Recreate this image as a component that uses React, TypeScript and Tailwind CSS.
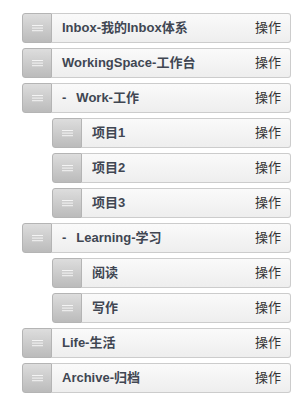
import React from "react";

type Item = { label: string; depth: number; collapse?: boolean };

const items: Item[] = [
  { label: "Inbox-我的Inbox体系", depth: 0 },
  { label: "WorkingSpace-工作台", depth: 0 },
  { label: "Work-工作", depth: 0, collapse: true },
  { label: "项目1", depth: 1 },
  { label: "项目2", depth: 1 },
  { label: "项目3", depth: 1 },
  { label: "Learning-学习", depth: 0, collapse: true },
  { label: "阅读", depth: 1 },
  { label: "写作", depth: 1 },
  { label: "Life-生活", depth: 0 },
  { label: "Archive-归档", depth: 0 },
];

function Handle() {
  return (
    <div className="relative h-[30px] w-[30px] shrink-0 rounded-l-[3px] border border-[#b4b4b4] bg-gradient-to-b from-[#ddd] to-[#bbb]">
      <svg width="30" height="30" viewBox="0 0 30 30" className="absolute left-[-1px] top-[-1px]">
        <rect x="10" y="12" width="11" height="1" fill="#f4f4f4" />
        <rect x="10" y="14.6" width="11" height="1" fill="#f4f4f4" />
        <rect x="10" y="17.2" width="11" height="1" fill="#f4f4f4" />
      </svg>
    </div>
  );
}

function Row({ item }: { item: Item }) {
  return (
    <div className={item.depth === 1 ? "flex pl-[30px]" : "flex"}>
      <Handle />
      <div className="flex h-[30px] flex-1 items-center justify-between rounded-r-[3px] border border-l-0 border-[#ccc] bg-gradient-to-b from-[#fafafa] to-[#eee] pl-[10px] pr-[9px] text-[13px] text-[#404652]">
        <span className="flex items-center font-bold">
          {item.collapse && <span className="mr-[10px]">-</span>}
          {item.label}
        </span>
        <span className="font-normal text-[#333]">操作</span>
      </div>
    </div>
  );
}

export default function App() {
  return (
    <div
      className="h-[407px] w-[308px] bg-white pl-[22px] pr-[17px] pt-[13px]"
      style={{ fontFamily: '"Liberation Sans", "Noto Sans CJK SC", sans-serif' }}
    >
      <div className="flex flex-col gap-[5px]">
        {items.map((it, i) => (
          <Row key={i} item={it} />
        ))}
      </div>
    </div>
  );
}
